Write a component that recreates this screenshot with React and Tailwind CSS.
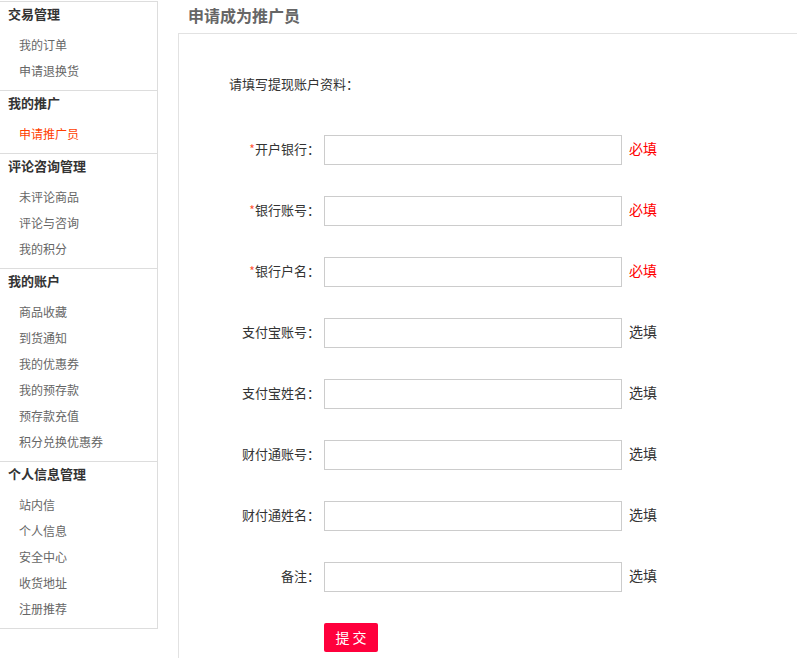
import React from 'react';

const menu = [
  { title: '交易管理', items: ['我的订单', '申请退换货'] },
  { title: '我的推广', items: ['申请推广员'] },
  { title: '评论咨询管理', items: ['未评论商品', '评论与咨询', '我的积分'] },
  { title: '我的账户', items: ['商品收藏', '到货通知', '我的优惠券', '我的预存款', '预存款充值', '积分兑换优惠券'] },
  { title: '个人信息管理', items: ['站内信', '个人信息', '安全中心', '收货地址', '注册推荐'] },
];

const fields = [
  { label: '开户银行', required: true },
  { label: '银行账号', required: true },
  { label: '银行户名', required: true },
  { label: '支付宝账号' },
  { label: '支付宝姓名' },
  { label: '财付通账号' },
  { label: '财付通姓名' },
  { label: '备注' },
];

const Sidebar = () => (
  <div className="w-[158px] shrink-0 self-start mt-px border-b border-r border-[#ddd]">
    {menu.map(section => (
      <div key={section.title} className="border-t border-[#ddd]">
        <h3 className="h-[26px] leading-[24px] pl-2 text-[13px] font-bold text-[#333]">{section.title}</h3>
        <ul className="py-[5px]">
          {section.items.map(item => (
            <li
              key={item}
              className={`h-[26px] leading-[24px] pl-[19px] text-[12px] ${item === '申请推广员' ? 'text-[#ff4000]' : 'text-[#666]'}`}
            >
              {item}
            </li>
          ))}
        </ul>
      </div>
    ))}
  </div>
);

const App = () => {
  return (
    <div className="flex bg-white w-[797px] min-h-[658px] font-['Noto_Sans_CJK_SC',sans-serif]">
      <Sidebar />

      <div className="flex-1 ml-5 flex flex-col">
        <h2 className="h-[33px] leading-[31px] pl-[10px] text-[16px] font-bold text-[#666]">申请成为推广员</h2>

        <div className="flex-1 border-l border-t border-[#e2e2e2] pt-10 pb-8">
          <p className="pl-[50px] h-5 leading-5 text-[13px] text-[#333]">请填写提现账户资料：</p>

          <div className="mt-[41px] flex flex-col gap-[31px]">
            {fields.map(field => (
              <div key={field.label} className="flex items-center h-[30px]">
                <label className="w-[141px] mr-1 mb-[3px] text-right text-[13px] text-[#333]">
                  {field.required && <span className="text-[#ff5533] text-[12px]">*</span>}
                  {field.label}：
                </label>
                <input type="text" className="w-[298px] h-[30px] border border-[#ccc] outline-none px-1 text-[13px]" />
                <span className={`ml-[7px] mb-[3px] text-[14px] ${field.required ? 'text-[#f00]' : 'text-[#333]'}`}>
                  {field.required ? '必填' : '选填'}
                </span>
              </div>
            ))}
          </div>

          <button className="ml-[145px] mt-[31px] w-[54px] h-[29px] rounded-[2px] bg-[#ff003c] text-white text-[14px] leading-[27px] cursor-pointer">
            提 交
          </button>
        </div>
      </div>
    </div>
  );
};

export default App;
